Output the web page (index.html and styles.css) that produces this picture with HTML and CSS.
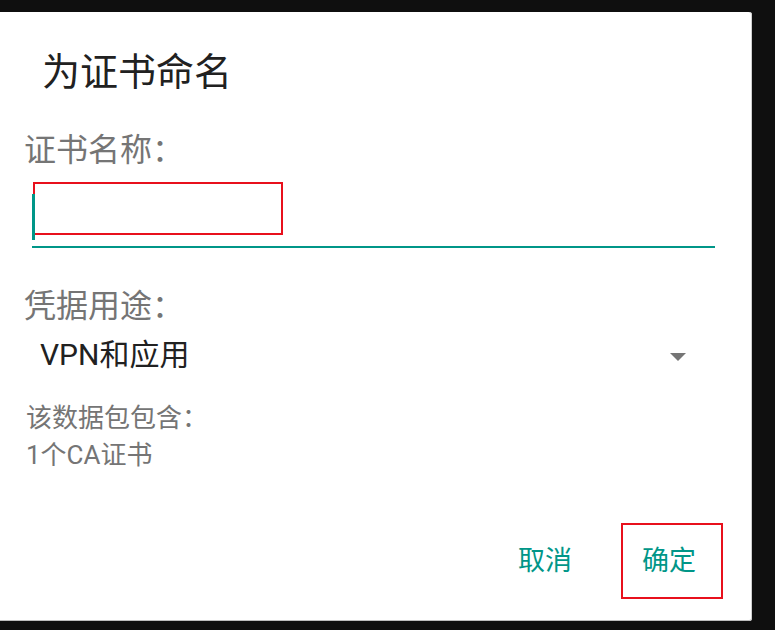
FILE: index.html
```html
<!DOCTYPE html>
<html lang="zh-CN">
<head>
<meta charset="utf-8">
<title>为证书命名</title>
<link rel="stylesheet" href="styles.css">
</head>
<body>
<div class="dialog">
  <h1 class="title">为证书命名</h1>
  <div class="body">
    <div class="label">证书名称：</div>
    <div class="field">
      <div class="annot"></div>
      <span class="cursor"></span>
    </div>
    <div class="label label-second">凭据用途：</div>
    <div class="spinner">
      <span class="value">VPN和应用</span>
      <span class="arrow"></span>
    </div>
    <div class="info">该数据包包含：<br>1个CA证书</div>
  </div>
  <div class="actions">
    <button class="btn">取消</button>
    <button class="btn btn-ok">确定</button>
  </div>
</div>
</body>
</html>
```
FILE: styles.css
```css
html, body {
  margin: 0;
  padding: 0;
  background: #0f0f0f;
  font-family: Roboto, "Noto Sans CJK SC", sans-serif;
}

.dialog {
  margin-top: 12px;
  width: 752px;
  box-sizing: border-box;
  padding: 41px 0 22px 0;
  background: #ffffff;
  border-radius: 0 3px 3px 0;
  box-shadow: inset 0 -1px 0 #bdbdbd, inset -1px 0 0 #cfcfcf;
}

.title {
  margin: 0;
  padding-left: 42px;
  font-size: 38px;
  line-height: 1;
  font-weight: 400;
  color: #212121;
}

.body {
  padding: 0 37px 0 24px;
}

.label {
  margin-top: 43px;
  font-size: 32px;
  line-height: 1;
  color: #757575;
}

.label-second {
  margin-top: 42px;
}

.field {
  position: relative;
  margin: 12px 0 0 8px;
  padding: 4px 0 11px 1px;
  border-bottom: 2px solid #009688;
}

.annot {
  width: 246px;
  height: 49px;
  border: 2px solid #e8101c;
}

.cursor {
  position: absolute;
  left: 0;
  top: 16px;
  width: 3px;
  height: 46px;
  background: #009688;
}

.spinner {
  margin-top: 18px;
  padding: 0 29px 0 16px;
  display: flex;
  align-items: center;
  justify-content: space-between;
}

.value {
  font-size: 30px;
  line-height: 1;
  color: #212121;
}

.arrow {
  width: 0;
  height: 0;
  margin-top: 3px;
  border-left: 8.5px solid transparent;
  border-right: 8.5px solid transparent;
  border-top: 8px solid #757575;
}

.info {
  margin-top: 30px;
  padding-left: 2px;
  font-size: 26px;
  line-height: 37px;
  color: #757575;
}

.actions {
  margin-top: 49px;
  padding-right: 29px;
  display: flex;
  justify-content: flex-end;
  gap: 25px;
}

.btn {
  width: 102px;
  height: 76px;
  box-sizing: border-box;
  padding: 0;
  border: 2px solid transparent;
  background: transparent;
  font-family: Roboto, "Noto Sans CJK SC", sans-serif;
  font-size: 27px;
  font-weight: 400;
  line-height: 1;
  color: #009688;
}

.btn-ok {
  border-color: #e8101c;
  padding-right: 6px;
}
```
